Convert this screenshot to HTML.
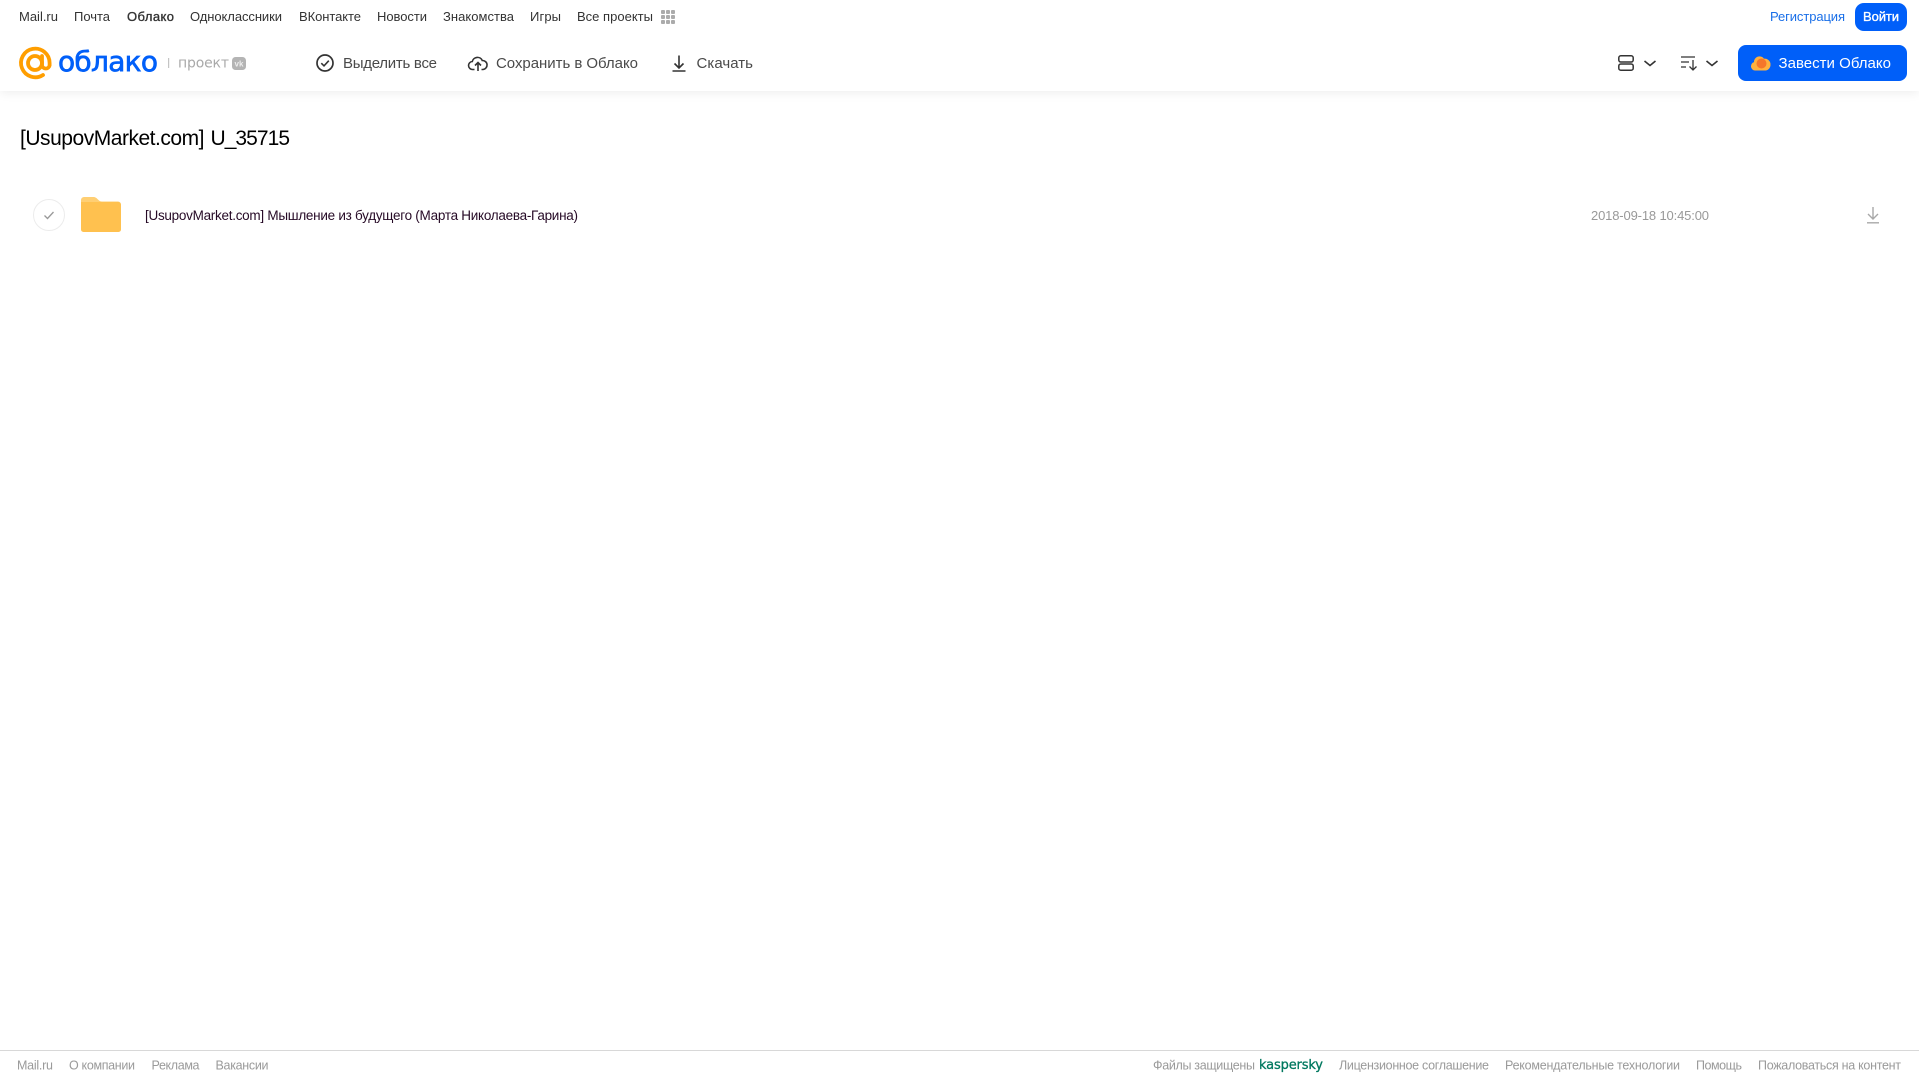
<!DOCTYPE html>
<html lang="ru">
<head>
<meta charset="utf-8">
<title>[UsupovMarket.com] U_35715</title>
<style>
html,body{margin:0;padding:0;width:1919px;height:1079px;overflow:hidden;background:#fff}
#hdr{position:absolute;left:0;top:0;width:1919px;height:91px;background:#fff;box-shadow:0 2px 10px rgba(0,0,0,.07)}
svg{position:absolute;left:0;top:0}
text{font-family:"Liberation Sans",Arial,sans-serif}
.n{font-size:13px;fill:#333}
.t{font-size:15px;fill:#4a4a4a}
.f{font-size:12.5px;fill:#9a9a9a}
</style>
</head>
<body>
<div id="hdr"></div>
<svg width="1919" height="1079" viewBox="0 0 1919 1079" xmlns="http://www.w3.org/2000/svg">
<text class="n" x="19" y="21" textLength="39">Mail.ru</text>
<text class="n" x="74" y="21" textLength="36">Почта</text>
<text class="n" x="127" y="21" textLength="47" stroke="#333" stroke-width=".35">Облако</text>
<text class="n" x="190" y="21" textLength="92">Одноклассники</text>
<text class="n" x="299" y="21" textLength="62">ВКонтакте</text>
<text class="n" x="377" y="21" textLength="50">Новости</text>
<text class="n" x="443" y="21" textLength="71">Знакомства</text>
<text class="n" x="530" y="21" textLength="31">Игры</text>
<text class="n" x="577" y="21" textLength="76">Все проекты</text>
<g fill="#ababab">
<rect x="661" y="10" width="4" height="4" rx="1"/><rect x="666" y="10" width="4" height="4" rx="1"/><rect x="671" y="10" width="4" height="4" rx="1"/>
<rect x="661" y="15" width="4" height="4" rx="1"/><rect x="666" y="15" width="4" height="4" rx="1"/><rect x="671" y="15" width="4" height="4" rx="1"/>
<rect x="661" y="20" width="4" height="4" rx="1"/><rect x="666" y="20" width="4" height="4" rx="1"/><rect x="671" y="20" width="4" height="4" rx="1"/>
</g>
<text x="1770" y="21" font-size="13" fill="#1a6fe8" textLength="75">Регистрация</text>
<rect x="1855" y="3" width="52" height="28" rx="9" fill="#005ff9"/>
<text x="1863" y="21" font-size="13" fill="#fff" stroke="#fff" stroke-width=".35" textLength="36">Войти</text>

<circle cx="35" cy="63" r="7" fill="none" stroke="#ff9e00" stroke-width="3.8"/>
<path d="M42 56V65.500a3.900 3.900 0 0 0 7.600 0V63A14.300 14.300 0 1 0 43 75" fill="none" stroke="#ff9e00" stroke-width="3.800" stroke-linecap="round"/>
<text x="58" y="71" font-size="28" style="font-family:'DejaVu Sans',sans-serif" fill="#005ff9" stroke="#005ff9" stroke-width=".7" textLength="100">облако</text>
<rect x="168" y="58" width="1.200" height="10" fill="#c4c4c4"/>
<text x="178" y="67.500" font-size="14" style="font-family:'DejaVu Sans',sans-serif" fill="#a9a9a9" textLength="51">проект</text>
<rect x="232" y="57" width="14" height="13" rx="3.500" fill="#b4b4b4"/>
<text x="234.500" y="66.500" font-size="8" font-weight="700" fill="#eee" textLength="9">vk</text>

<circle cx="325" cy="63" r="8" fill="none" stroke="#333" stroke-width="1.700"/>
<path d="M321.300 63.200l2.700 2.700 4.800-5.200" fill="none" stroke="#333" stroke-width="1.600"/>
<text class="t" x="343" y="68" textLength="94">Выделить все</text>
<path d="M474.500 69.500h-1.700a4 4 0 0 1-.5-8 5.300 5.300 0 0 1 10-1 4.500 4.500 0 0 1 .5 9h-1.300M478 71V62.500M475 65.500l3-3 3 3" fill="none" stroke="#333" stroke-width="1.600"/>
<text class="t" x="496" y="68" textLength="142">Сохранить в Облако</text>
<path d="M679 55.500v12M674.500 63.500l4.500 4.500 4.500-4.500M672.500 71h13" fill="none" stroke="#333" stroke-width="1.600"/>
<text class="t" x="696.500" y="68" textLength="56.500">Скачать</text>

<rect x="1618.800" y="55.800" width="14.400" height="6.200" rx="2" fill="none" stroke="#333" stroke-width="1.500"/>
<rect x="1618.800" y="64" width="14.400" height="6.200" rx="2" fill="none" stroke="#333" stroke-width="1.500"/>
<path d="M1644.500 61l5.500 4.500 5.500-4.500" fill="none" stroke="#333" stroke-width="1.600"/>
<path d="M1681 57h14M1681 62h8M1681 67h5M1693 60v10M1689.500 66.500l3.500 3.500 3.500-3.500" fill="none" stroke="#333" stroke-width="1.300"/>
<path d="M1706.500 61l5.500 4.500 5.500-4.500" fill="none" stroke="#333" stroke-width="1.600"/>
<rect x="1738" y="45" width="169" height="36" rx="8" fill="#005ff9"/>
<path d="M1755 70.500a4.300 4.300 0 0 1-1-8.400 5.500 5.500 0 0 1 10-3.400 6 6 0 0 1 2 11.800z" fill="#ffb13d"/>
<circle cx="1761.500" cy="63.500" r="5" fill="#f5762a"/>
<text x="1778.500" y="68" font-size="15" fill="#fff" textLength="112.500">Завести Облако</text>

<text x="20" y="145" font-size="21" fill="#000" textLength="184.500">[UsupovMarket.com]</text>
<text x="210.500" y="145" font-size="21" fill="#000" textLength="79.500">U_35715</text>

<circle cx="49" cy="215" r="15.500" fill="#fff" stroke="#ececec"/>
<path d="M44.500 215.500l3 3 6-6.500" fill="none" stroke="#999" stroke-width="1.300"/>
<path d="M81 200a3 3 0 0 1 3-3h9c2.500 0 3.500 1 5 2.500 1 1 2 2 4 2h16a3 3 0 0 1 3 3v5H81z" fill="#ffcf73"/>
<path d="M81 202h37a3 3 0 0 1 3 3V229.500a2.500 2.500 0 0 1-2.500 2.500H83.500a2.500 2.500 0 0 1-2.500-2.500z" fill="#ffc14f"/>
<text x="145" y="220" font-size="13.500" fill="#260a26" textLength="433">[UsupovMarket.com] Мышление из будущего (Марта Николаева-Гарина)</text>
<text x="1591" y="220" font-size="13" fill="#999" textLength="118">2018-09-18 10:45:00</text>
<path d="M1873 207v12M1868 214l5 5 5-5M1867 222.800h12" fill="none" stroke="#a8a8a8" stroke-width="1.400"/>

<rect x="0" y="1050" width="1919" height="1" fill="#d8d8d8"/>
<text class="f" x="17" y="1069.500" textLength="36">Mail.ru</text>
<text class="f" x="69" y="1069.500" textLength="66">О компании</text>
<text class="f" x="151.500" y="1069.500" textLength="48">Реклама</text>
<text class="f" x="215.500" y="1069.500" textLength="53">Вакансии</text>
<text class="f" x="1153" y="1069.500" textLength="102">Файлы защищены</text>
<text x="1259" y="1069" font-size="13" fill="#00785f" stroke="#00785f" stroke-width=".3" textLength="64" style="font-family:'DejaVu Sans',sans-serif">kaspersky</text>
<text class="f" x="1339" y="1069.500" textLength="150">Лицензионное соглашение</text>
<text class="f" x="1505" y="1069.500" textLength="175">Рекомендательные технологии</text>
<text class="f" x="1696" y="1069.500" textLength="46">Помощь</text>
<text class="f" x="1758" y="1069.500" textLength="143">Пожаловаться на контент</text>
</svg>
</body>
</html>
